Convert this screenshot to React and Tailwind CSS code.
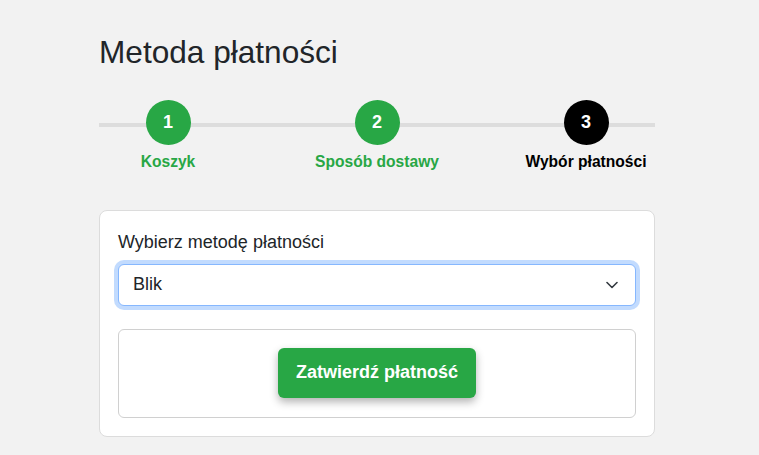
const STEPS = [
  { n: 1, label: "Koszyk", done: true },
  { n: 2, label: "Sposób dostawy", done: true },
  { n: 3, label: "Wybór płatności", done: false },
];

export default function App() {
  return (
    <div className="min-h-screen bg-[#f2f2f2] font-['Liberation_Sans',Arial,sans-serif] text-[#212529]">
      <div className="w-[556px] ml-[99px] pt-[34px] pb-10">
        <h1 className="text-[31.6px] leading-[1.2] font-normal mb-[28px]">Metoda płatności</h1>

        {/* Stepper */}
        <div className="relative mb-[36px]">
          <div className="absolute left-0 right-0 top-[23px] h-[4px] bg-[#dddddd]" />
          <div className="relative flex justify-between">
            {STEPS.map((s) => (
              <div key={s.n} className="w-[138px] flex flex-col items-center">
                <div
                  className={`w-[45px] h-[45px] rounded-full flex items-center justify-center text-white font-bold text-[18px] ${
                    s.done ? "bg-[#28a745]" : "bg-black"
                  }`}
                >
                  {s.n}
                </div>
                <div
                  className={`mt-[5px] text-[15.6px] leading-[24px] font-bold whitespace-nowrap ${
                    s.done ? "text-[#28a745]" : "text-black"
                  }`}
                >
                  {s.label}
                </div>
              </div>
            ))}
          </div>
        </div>

        {/* Payment card */}
        <div className="bg-white border border-[#dcdcdc] rounded-[8px] p-[18px]">
          <label className="block text-[18px] leading-[27px] mb-[8px]">Wybierz metodę płatności</label>
          <div className="relative mb-[23px]">
            <select
              defaultValue="blik"
              className="w-full h-[42px] appearance-none bg-white border border-[#86b7fe] rounded-[6px] pl-[14px] pr-10 text-[18px] text-[#212529] shadow-[0_0_0_4px_rgba(13,110,253,0.25)] outline-none"
            >
              <option value="blik">Blik</option>
              <option value="card">Karta płatnicza</option>
              <option value="transfer">Przelew</option>
            </select>
            <svg
              className="absolute right-[18px] top-1/2 -translate-y-1/2 pointer-events-none"
              width="12"
              height="8"
              viewBox="0 0 12 8"
              fill="none"
            >
              <path d="M1 1.5l5 5 5-5" stroke="#343a40" strokeWidth="1.6" strokeLinecap="round" strokeLinejoin="round" />
            </svg>
          </div>

          <div className="border border-[#d0d0d0] rounded-[6px] pt-[18px] pb-[19px] flex justify-center">
            <button className="h-[50px] px-[18px] bg-[#28a745] text-white font-bold text-[18px] rounded-[6px] shadow-[0_4px_8px_rgba(0,0,0,0.3)]">
              Zatwierdź płatność
            </button>
          </div>
        </div>
      </div>
    </div>
  );
}
